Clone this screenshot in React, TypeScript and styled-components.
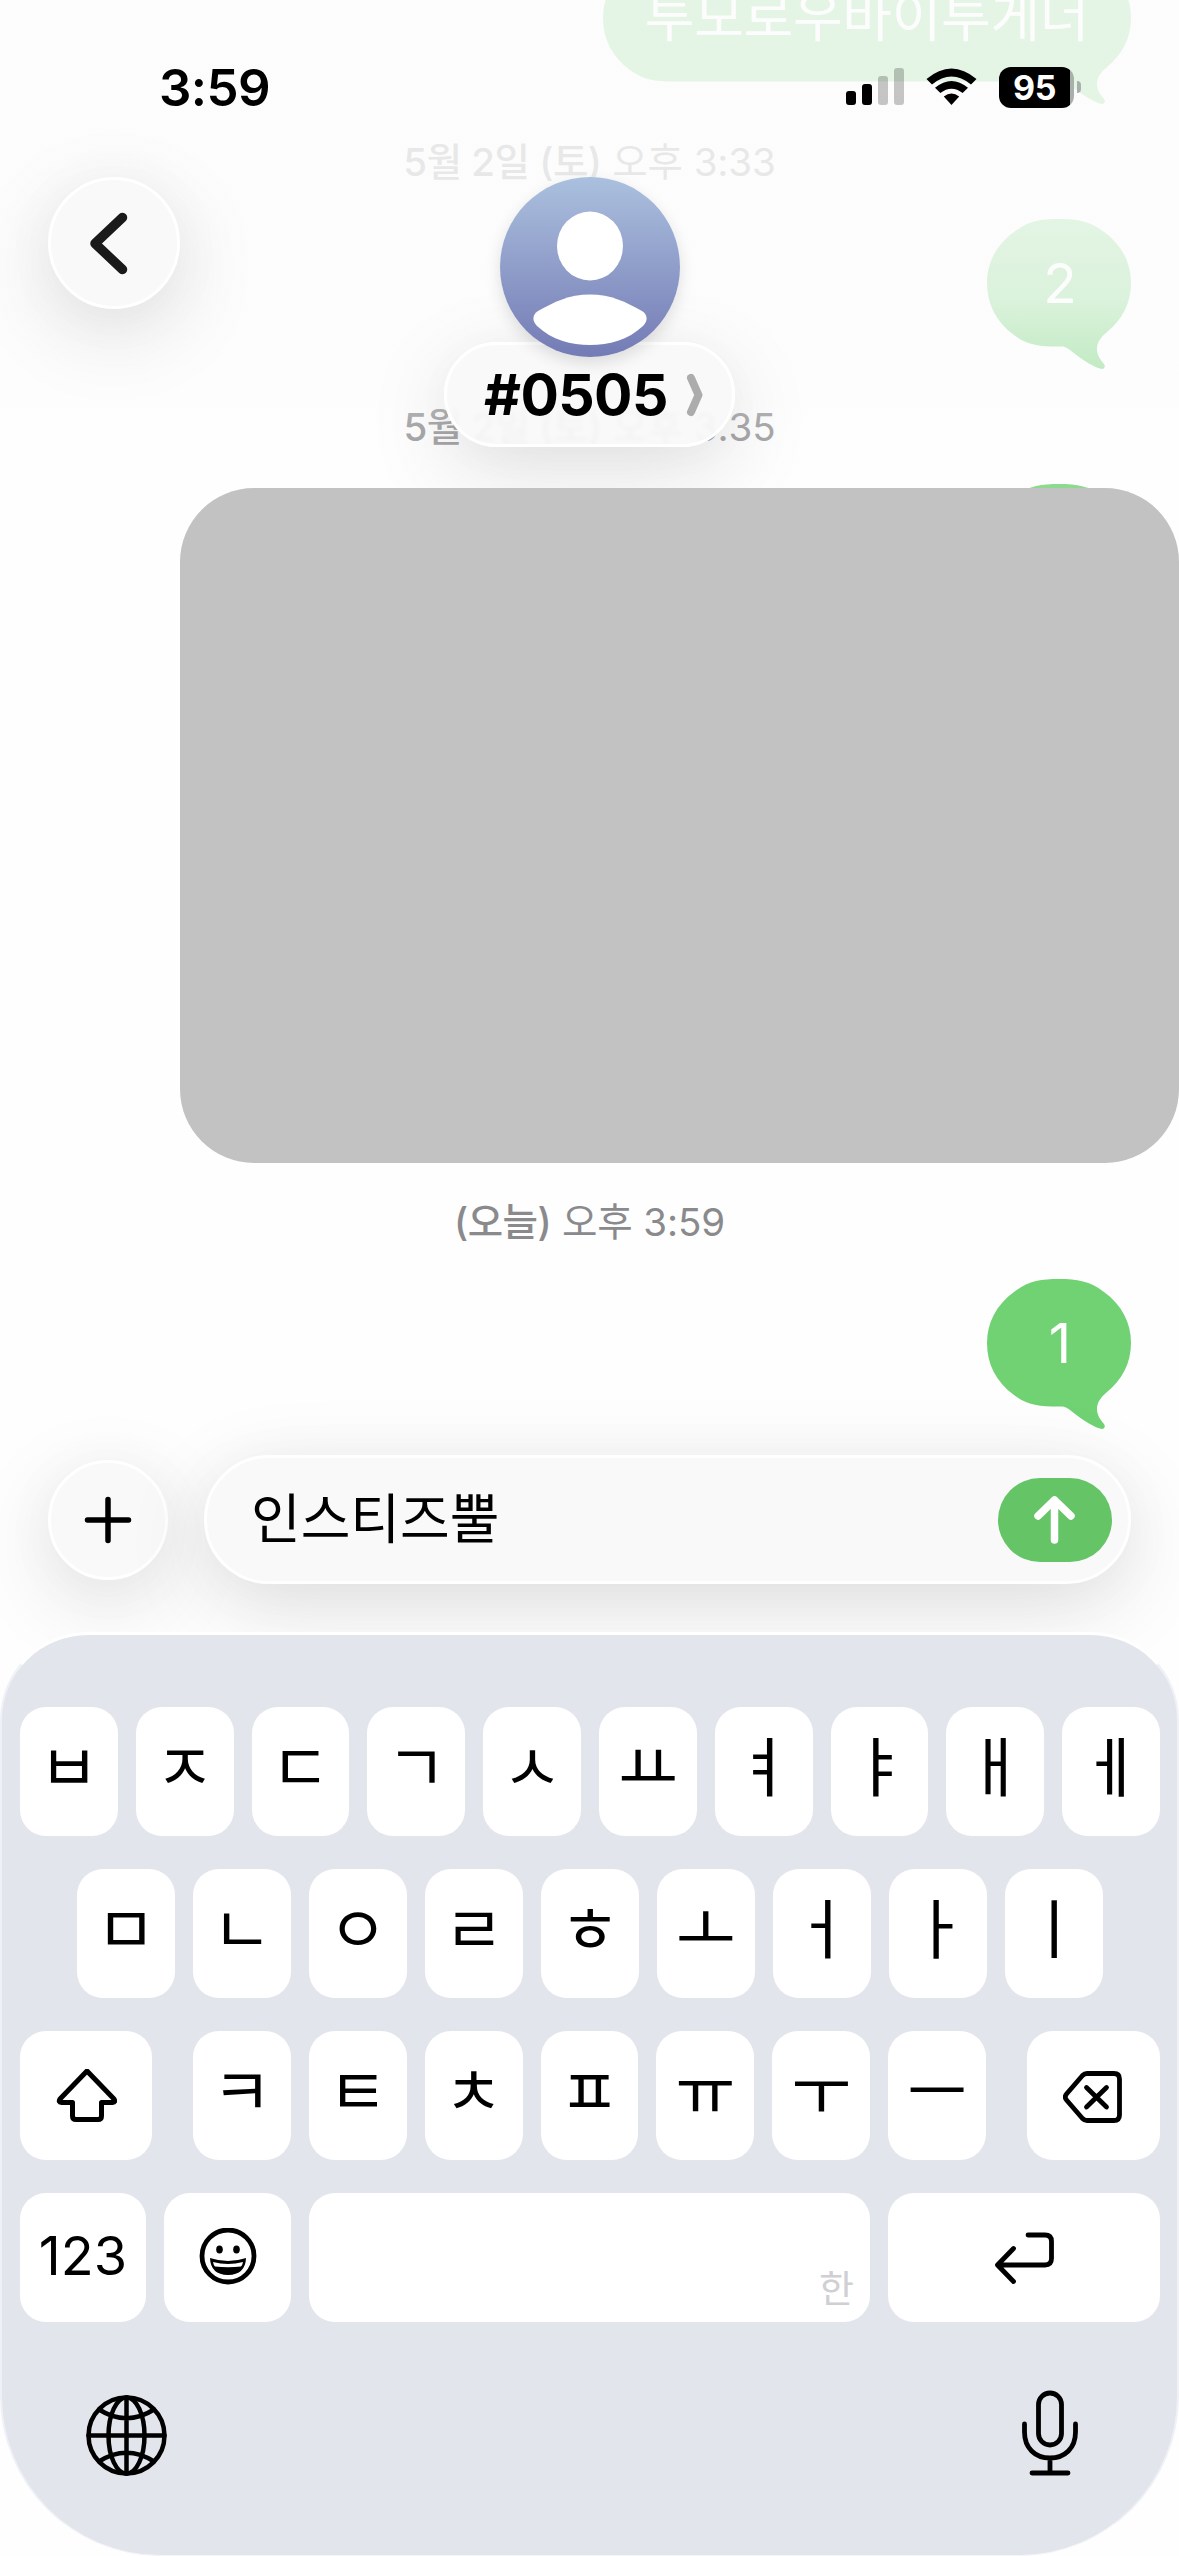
import React from "react";
import styled, { createGlobalStyle, css } from "styled-components";

const GlobalStyle = createGlobalStyle`
  * { box-sizing: border-box; }
  body { margin: 0; background: #fff; }
`;

const glass = css`
  border: 3px solid #fff;
  background: #f9f9f9;
  box-shadow: 0 24px 90px rgba(0, 0, 0, 0.11), 0 8px 60px rgba(0, 0, 0, 0.04);
`;

const Screen = styled.div`
  display: grid;
  width: 1179px;
  height: 2556px;
  overflow: hidden;
  background: #fefefe;
  color: #000;
  font-family: Inter, "Noto Sans CJK KR", sans-serif;

  > * {
    grid-area: 1 / 1;
    min-width: 0;
  }
`;

/* Conversation */

const Conversation = styled.main`
  display: flex;
  flex-direction: column;
  height: 1632px;
  overflow: hidden;
`;

const BubbleRow = styled.div<{ $top: number }>`
  display: flex;
  flex: none;
  justify-content: flex-end;
  height: 150px;
  margin-top: ${(p) => p.$top}px;
  padding-right: 48px;
`;

const BubbleBox = styled.div<{ $width: number }>`
  display: grid;
  width: ${(p) => p.$width}px;
  height: 150px;

  > * {
    grid-area: 1 / 1;
  }
`;

const BubbleText = styled.span<{ $wide: boolean }>`
  height: 128px;
  line-height: 128px;
  padding-left: ${(p) => (p.$wide ? 0 : 2)}px;
  font-size: ${(p) => (p.$wide ? 54 : 55)}px;
  letter-spacing: ${(p) => (p.$wide ? -0.3 : 0)}px;
  text-align: center;
  white-space: nowrap;
  color: #fff;
`;

const Stamp = styled.div<{ $top: number }>`
  flex: none;
  height: 50px;
  margin-top: ${(p) => p.$top}px;
  line-height: 50px;
  font-size: 38.5px;
  letter-spacing: -0.1px;
  text-align: center;
  white-space: pre;
  color: #8a8a8d;

  b {
    font-weight: 500;
    letter-spacing: -0.5px;
  }
`;

const Media = styled.div`
  position: relative;
  z-index: 2;
  flex: none;
  align-self: flex-end;
  width: 999px;
  height: 675px;
  margin-top: -146px;
  border-radius: 74px;
  background: #c2c2c2;
`;

const Veil = styled.div`
  height: 488px;
  background: linear-gradient(
    rgba(252, 252, 252, 0.83) 0,
    rgba(252, 252, 252, 0.82) 225px,
    rgba(252, 252, 252, 0.76) 300px,
    rgba(252, 252, 252, 0.6) 365px,
    rgba(252, 252, 252, 0.27) 427px,
    rgba(252, 252, 252, 0.2) 488px
  );
`;

/* Header */

const Header = styled.header`
  display: flex;
  flex-direction: column;
  height: 488px;
`;

const StatusBar = styled.div`
  display: flex;
  align-items: center;
  height: 177px;
  padding: 0 98px 1px 159px;
`;

const Clock = styled.span`
  flex: 1;
  line-height: 60px;
  font-size: 51px;
  font-weight: 600;
  letter-spacing: -0.6px;
`;

const StatusIcons = styled.div`
  display: flex;
  align-items: center;
  gap: 22px;
  padding-bottom: 2px;
`;

const Battery = styled.div`
  display: flex;
  align-items: center;
  gap: 3px;
`;

const BatteryBody = styled.div`
  width: 75px;
  height: 41px;
  padding-right: 4px;
  border-radius: 12px;
  background: linear-gradient(90deg, #000 71px, #a9b0ab 71px);
  color: #fff;
  font-size: 34px;
  font-weight: 700;
  letter-spacing: -0.5px;
  line-height: 41px;
  text-align: center;
`;

const BatteryTip = styled.div`
  width: 4px;
  height: 12px;
  border-radius: 0 4px 4px 0;
  background: #a9b0ab;
`;

const NavRow = styled.div`
  display: grid;
  grid-template-columns: 132px 1fr 132px;
  padding: 0 48px;
`;

const BackButton = styled.button`
  ${glass}
  display: flex;
  width: 132px;
  height: 132px;
  padding: 0;
  border-radius: 50%;
`;

const Contact = styled.div`
  display: flex;
  flex-direction: column;
  align-items: center;
`;

const Avatar = styled.svg`
  position: relative;
  z-index: 1;
  width: 180px;
  height: 180px;
  border-radius: 50%;
  box-shadow: 0 6px 16px rgba(0, 0, 0, 0.12);
`;

const NamePill = styled.div`
  ${glass}
  display: flex;
  align-items: center;
  gap: 18px;
  width: 291px;
  height: 105px;
  margin-top: -15px;
  padding-left: 37px;
  border-radius: 53px;
  background: rgba(249, 249, 249, 0.93);
  backdrop-filter: blur(2px);
  font-size: 57px;
  font-weight: 700;
  line-height: 96px;
  letter-spacing: -0.6px;
`;

/* Composer and keyboard */

const Bottom = styled.footer`
  display: flex;
  flex-direction: column;
  align-self: end;
  height: 1101px;
`;

const Composer = styled.div`
  display: flex;
  align-items: center;
  gap: 36px;
  height: 129px;
  margin-bottom: 48px;
  padding: 0 48px;
`;

const PlusButton = styled.button`
  ${glass}
  display: flex;
  width: 120px;
  height: 120px;
  padding: 0;
  border-radius: 50%;
`;

const Field = styled.div`
  ${glass}
  display: flex;
  flex: 1;
  align-items: center;
  justify-content: space-between;
  height: 129px;
  padding: 0 16px 0 44px;
  border-radius: 65px;
  font-size: 54px;
  line-height: 70px;
`;

const SendButton = styled.button`
  display: flex;
  width: 114px;
  height: 84px;
  padding: 0;
  border: 0;
  border-radius: 42px;
  background: #65c466;
`;

const Keyboard = styled.section`
  position: relative;
  display: flex;
  flex-direction: column;
  gap: 33px;
  height: 924px;
  padding: 72px 17px 0 18px;
  border: solid #fff;
  border-width: 3px 2px 1px;
  border-color: #fff #eff1f7 #f3f4f8;
  border-radius: 88px 88px 160px 160px;
  background: #e3e5ed;
`;

const KeyRow = styled.div<{ $inset?: number }>`
  display: flex;
  gap: 18px;
  height: 129px;
  padding: 0 ${(p) => p.$inset ?? 0}px;
`;

const LetterGroup = styled.div`
  display: flex;
  flex: 1;
  gap: 18px;
  padding: 0 23px;
`;

const Key = styled.button<{ $width?: number }>`
  display: flex;
  flex: ${(p) => (p.$width ? `0 0 ${p.$width}px` : "1 1 0")};
  align-items: center;
  justify-content: center;
  min-width: 0;
  height: 129px;
  padding: 0;
  border: 0;
  border-radius: 26px;
  background: #fff;
  color: #000;
  font-family: inherit;
  font-size: 54px;
  line-height: 70px;
`;

const Jamo = styled.span`
  padding-bottom: 18px;
  font-family: "Noto Sans CJK KR", sans-serif;
  font-size: 65px;
  font-weight: 400;
`;

const NumberLabel = styled.span`
  padding-bottom: 3px;
`;

const SpaceKey = styled(Key)`
  align-items: flex-end;
  justify-content: flex-end;
  padding: 0 16px 11px 0;
  color: #cfcfd4;
  font-size: 38px;
  line-height: 46px;
`;

const Dock = styled.div`
  display: flex;
  justify-content: space-between;
  padding: 30px 80px 0 58px;
`;

const Icon = styled.svg`
  display: block;
  flex: none;
  margin: auto;
  fill: none;
  stroke: #000;
  stroke-linecap: round;
  stroke-linejoin: round;
`;

const DockIcon = styled(Icon)`
  margin: 0;
`;

function Bubble({ text, top, width = 144 }: { text: string; top: number; width?: number }) {
  const r = width;
  const outline = [
    `M72 0 H${r - 72}`,
    `C${r - 54} 0 ${r - 41} 2 ${r - 27} 13`,
    `C${r - 9} 26 ${r} 44 ${r} 64`,
    `C${r} 84 ${r - 9} 101 ${r - 24} 113`,
    `C${r - 31} 119 ${r - 34} 124 ${r - 34} 130`,
    `C${r - 34} 136 ${r - 31} 140 ${r - 27} 145`,
    `C${r - 25} 148 ${r - 27} 151 ${r - 31} 149.500`,
    `C${r - 41} 146.500 ${r - 52} 138 ${r - 61} 131`,
    `C${r - 65} 128 ${r - 67} 127.500 ${r - 71} 127.500`,
    `H72 C52 127.500 40 126 27 116 C9 103 0 85 0 64 C0 44 9 26 27 13 C41 2 54 0 72 0Z`,
  ].join(" ");
  return (
    <BubbleRow $top={top}>
      <BubbleBox $width={width}>
        <svg width={width} height="151" viewBox={`0 0 ${width} 151`}>
          <path d={outline} fill="#70d273" />
        </svg>
        <BubbleText $wide={width > 144}>{text}</BubbleText>
      </BubbleBox>
    </BubbleRow>
  );
}

const row1 = ["ㅂ", "ㅈ", "ㄷ", "ㄱ", "ㅅ", "ㅛ", "ㅕ", "ㅑ", "ㅐ", "ㅔ"];
const row2 = ["ㅁ", "ㄴ", "ㅇ", "ㄹ", "ㅎ", "ㅗ", "ㅓ", "ㅏ", "ㅣ"];
const row3 = ["ㅋ", "ㅌ", "ㅊ", "ㅍ", "ㅠ", "ㅜ", "ㅡ"];

const letters = (keys: string[]) =>
  keys.map((k) => (
    <Key key={k}>
      <Jamo>{k}</Jamo>
    </Key>
  ));

export default function App() {
  return (
    <>
      <GlobalStyle />
      <Screen>
        <Conversation>
          <Bubble text="투모로우바이투게더" top={-46} width={528} />
          <Stamp $top={33}>
            <b>5월 2일 (토)</b> 오후 3:33
          </Stamp>
          <Bubble text="2" top={32} />
          <Stamp $top={33}>
            <b>5월 2일 (토)</b> 오후 3:35
          </Stamp>
          <Bubble text="" top={32} />
          <Media />
          <Stamp $top={34}>
            <b>(오늘)</b> 오후 3:59
          </Stamp>
          <Bubble text="1" top={32} />
        </Conversation>

        <Veil />

        <Header>
          <StatusBar>
            <Clock>3:59</Clock>
            <StatusIcons>
              <svg width="58" height="38" viewBox="0 0 58 38">
                <rect x="0" y="23" width="10" height="14" rx="3" />
                <rect x="16" y="16" width="10" height="21" rx="3" />
                <rect x="32" y="8" width="10" height="29" rx="3" fillOpacity="0.22" />
                <rect x="48" y="0" width="10" height="37" rx="3" fillOpacity="0.22" />
              </svg>
              <svg width="51" height="38" viewBox="0 0 51 38">
                <path d="M0.500 11 Q25.500 -10 50.500 11 L45 16.500 Q25.500 0.500 6 16.500Z" />
                <path d="M9 19.800 Q25.500 6 42 19.800 L36.600 25 Q25.500 16.500 14.400 25Z" />
                <path d="M17.800 28.500 Q25.500 22.500 33.200 28.500 L25.500 37Z" />
              </svg>
              <Battery>
                <BatteryBody>95</BatteryBody>
                <BatteryTip />
              </Battery>
            </StatusIcons>
          </StatusBar>
          <NavRow>
            <BackButton aria-label="뒤로">
              <Icon width="126" height="126" viewBox="0 0 126 126" strokeWidth="9.500">
                <path d="M71.500 37.500 L44 63.500 L71.500 89.500" stroke="#1a1a1a" />
              </Icon>
            </BackButton>
            <Contact>
              <Avatar viewBox="0 0 180 180">
                <defs>
                  <linearGradient id="avatar" x1="0" y1="0" x2="0" y2="1">
                    <stop offset="0" stopColor="#abc0de" />
                    <stop offset="1" stopColor="#747bb5" />
                  </linearGradient>
                </defs>
                <rect width="180" height="180" fill="url(#avatar)" />
                <ellipse cx="90" cy="69" rx="33" ry="34.500" fill="#fff" />
                <path
                  d="M90 117.500 C111 117.500 126 125 142 134 C148 138 148 144 143 149 C128 163 109 168 90 168 C71 168 52 163 37 149 C32 144 32 138 38 134 C54 125 69 117.500 90 117.500Z"
                  fill="#fff"
                />
              </Avatar>
              <NamePill>
                #0505
                <svg width="18" height="44" viewBox="0 0 18 44">
                  <path
                    d="M5 5 L12.500 22 L5 39"
                    fill="none"
                    stroke="#acacac"
                    strokeWidth="8"
                    strokeLinecap="round"
                    strokeLinejoin="round"
                  />
                </svg>
              </NamePill>
            </Contact>
          </NavRow>
        </Header>

        <Bottom>
          <Composer>
            <PlusButton aria-label="추가">
              <Icon width="114" height="114" viewBox="0 0 114 114" strokeWidth="5.500">
                <path d="M57 36.500 V77.500 M36.500 57 H77.500" />
              </Icon>
            </PlusButton>
            <Field>
              <span>인스티즈뿔</span>
              <SendButton aria-label="보내기">
                <Icon width="114" height="84" viewBox="0 0 114 84" strokeWidth="7.500">
                  <path d="M56.500 62 V22 M40 38 L56.500 22 L73 38" stroke="#fff" />
                </Icon>
              </SendButton>
            </Field>
          </Composer>
          <Keyboard>
            <KeyRow>{letters(row1)}</KeyRow>
            <KeyRow $inset={57}>{letters(row2)}</KeyRow>
            <KeyRow>
              <Key $width={132} aria-label="shift">
                <Icon width="62" height="54" viewBox="-1 1 62 54" strokeWidth="5">
                  <path d="M31 3 L58 31 Q60 34.500 56.500 34.500 H45.500 V48 Q45.500 51.500 42 51.500 H20 Q16.500 51.500 16.500 48 V34.500 H5.500 Q2 34.500 4 31Z" />
                </Icon>
              </Key>
              <LetterGroup>{letters(row3)}</LetterGroup>
              <Key $width={133} aria-label="delete">
                <Icon width="62" height="54" viewBox="2 -1 62 54" strokeWidth="4.800">
                  <path d="M26 3.500 H53 Q58.500 3.500 58.500 9 V45 Q58.500 50.500 53 50.500 H26 Q23.500 50.500 21.500 48.500 L5.500 30 Q3 27 5.500 24 L21.500 5.500 Q23.500 3.500 26 3.500Z" />
                  <path d="M25.500 17.500 L45.500 37 M45.500 17.500 L25.500 37" />
                </Icon>
              </Key>
            </KeyRow>
            <KeyRow>
              <Key $width={126}>
                <NumberLabel>123</NumberLabel>
              </Key>
              <Key $width={127} aria-label="emoji">
                <Icon width="58" height="60" viewBox="0 1 58 60" strokeWidth="4.800">
                  <circle cx="29" cy="29" r="26" />
                  <ellipse cx="20.500" cy="22.500" rx="3.300" ry="3.900" fill="#000" stroke="none" />
                  <ellipse cx="37.500" cy="22.500" rx="3.300" ry="3.900" fill="#000" stroke="none" />
                  <path
                    d="M11 31 Q29 37 47 31 Q46.500 47.500 29 48 Q11.500 47.500 11 31Z"
                    fill="#000"
                    stroke="none"
                  />
                  <path
                    d="M14 35 Q29 39 44 35 Q43.500 38 42 39.500 Q29 41 16 39.500 Q14.500 38 14 35Z"
                    fill="#fff"
                    stroke="none"
                  />
                </Icon>
              </Key>
              <SpaceKey>한</SpaceKey>
              <Key $width={272} aria-label="return">
                <Icon width="60" height="54" viewBox="0 0 60 54" strokeWidth="4.800">
                  <path d="M34 4 H51 Q57.500 4 57.500 10.500 V27.500 Q57.500 34 51 34 H4 M19.500 17.500 L3.500 34 L19.500 50.500" />
                </Icon>
              </Key>
            </KeyRow>
            <Dock>
              <DockIcon width="96" height="106" viewBox="0 0 96 106" strokeWidth="4.500">
                <circle cx="48.500" cy="50.500" r="38" />
                <ellipse cx="48.500" cy="50.500" rx="18" ry="38" />
                <path d="M48.500 12.500 V88.500 M10.500 50.500 H86.500 M21 24.500 Q48.500 42 76 24.500 M21 76.500 Q48.500 59 76 76.500" />
              </DockIcon>
              <DockIcon width="60" height="106" viewBox="0 0 60 106" strokeWidth="4.800">
                <rect x="18.500" y="8" width="23" height="52" rx="11.500" />
                <path d="M4.500 39 V47 C4.500 63 15 73 30 73 C45 73 55.500 63 55.500 47 V39 M30 73 V88 M12 88 H48" />
              </DockIcon>
            </Dock>
          </Keyboard>
        </Bottom>
      </Screen>
    </>
  );
}
